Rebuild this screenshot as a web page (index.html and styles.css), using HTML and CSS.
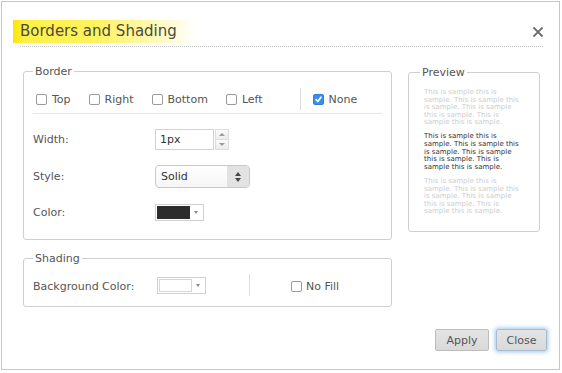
FILE: index.html
```html
<!DOCTYPE html>
<html lang="en">
<head>
<meta charset="utf-8">
<title>Borders and Shading</title>
<link rel="stylesheet" href="styles.css">
</head>
<body>
<div class="dialog">
  <div class="header">
    <h1 class="title">Borders and Shading</h1>
    <span class="close" aria-label="Close"><svg width="10" height="10" viewBox="0 0 10 10"><path d="M1 1L9 9M9 1L1 9" stroke="#6a6a6a" stroke-width="1.8" stroke-linecap="square"/></svg></span>
  </div>
  <div class="rule"></div>
  <div class="body">
    <div class="left">
      <fieldset class="group border-group">
        <legend>Border</legend>
        <div class="sides">
          <label class="check"><span class="cb"></span>Top</label>
          <label class="check"><span class="cb"></span>Right</label>
          <label class="check"><span class="cb"></span>Bottom</label>
          <label class="check last"><span class="cb"></span>Left</label>
          <span class="vsep"></span>
          <label class="check"><span class="cb checked"><svg width="9" height="9" viewBox="0 0 9 9"><path d="M2 4.6L3.8 6.5L7 2.2" fill="none" stroke="#fff" stroke-width="1.6" stroke-linecap="round" stroke-linejoin="round"/></svg></span>None</label>
        </div>
        <div class="hr"></div>
        <div class="form">
          <span class="lbl">Width:</span>
          <div class="spin">
            <span class="input">1px</span>
            <span class="spinbtns"><span class="sbtn"><i class="tri-up"></i></span><span class="sbtn"><i class="tri-down"></i></span></span>
          </div>
          <span class="lbl">Style:</span>
          <div class="select">
            <span class="sel-text">Solid</span>
            <span class="sel-arrows"><i class="tri-up dark"></i><i class="tri-down dark"></i></span>
          </div>
          <span class="lbl">Color:</span>
          <div class="picker"><span class="swatch dark-swatch"></span><i class="tri-down grey"></i></div>
        </div>
      </fieldset>
      <fieldset class="group shading">
        <legend>Shading</legend>
        <div class="shade-row">
          <span class="lbl bg-lbl">Background Color:</span>
          <div class="picker"><span class="swatch white-swatch"></span><i class="tri-down grey"></i></div>
          <span class="vsep shade-sep"></span>
          <label class="check"><span class="cb"></span>No Fill</label>
        </div>
      </fieldset>
    </div>
    <fieldset class="group preview">
      <legend>Preview</legend>
      <div class="preview-clip">
        <p class="ptext light">This is sample this is sample. This is sample this is sample. This is sample this is sample. This is sample this is sample.</p>
        <p class="ptext darktext">This is sample this is sample. This is sample this is sample. This is sample this is sample. This is sample this is sample.</p>
        <p class="ptext light">This is sample this is sample. This is sample this is sample. This is sample this is sample. This is sample this is sample.</p>
      </div>
    </fieldset>
  </div>
  <div class="footer">
    <button class="btn apply">Apply</button>
    <button class="btn primary">Close</button>
  </div>
</div>
</body>
</html>
```
FILE: styles.css
```css
html, body {
  margin: 0;
  padding: 0;
  background: #fff;
  font-family: "DejaVu Sans", "Liberation Sans", sans-serif;
}

.dialog {
  margin: 1px;
  width: 559px;
  height: 369px;
  box-sizing: border-box;
  border: 1px solid #c6c6c6;
  background: #fff;
}

.header {
  display: flex;
  align-items: center;
  justify-content: space-between;
  padding: 18px 16px 0 11px;
}

.title {
  margin: 0;
  font-size: 15px;
  font-weight: normal;
  color: #4a4a40;
  height: 23px;
  line-height: 23px;
  width: 176px;
  padding-left: 7px;
  background: linear-gradient(to right, #ffe400 0%, #fff048 6%, #fff35e 45%, #fff9b0 75%, rgba(255,255,255,0) 100%);
}

.close {
  display: flex;
  width: 10px;
  height: 10px;
}

.rule {
  margin: 3px 16px 0 18px;
  border-top: 1px dotted #c4c4c4;
}

.body {
  display: flex;
  align-items: flex-start;
  gap: 16px;
  padding: 18px 19px 0 21px;
}

.left {
  width: 369px;
  display: flex;
  flex-direction: column;
  gap: 12px;
}

.group {
  margin: 0;
  padding: 0 9px;
  border: 1px solid #cfcfcf;
  border-radius: 3px;
  min-width: 0;
}

legend {
  padding: 0 2px;
  font-size: 11px;
  line-height: 13px;
  color: #555;
}

.border-group {
  padding-bottom: 16px;
}

.sides {
  display: flex;
  align-items: center;
  height: 22px;
  margin-top: 10px;
  padding-left: 3px;
}

.check {
  display: flex;
  align-items: center;
  gap: 5px;
  font-size: 11px;
  color: #555;
  margin-right: 18px;
}

.check.last {
  margin-right: 37px;
}

.cb {
  width: 11px;
  height: 11px;
  box-sizing: border-box;
  border: 1px solid #9a9a9a;
  border-radius: 2px;
  background: #fff;
  display: flex;
  align-items: center;
  justify-content: center;
}

.cb.checked {
  background: #3b8fe9;
  border-color: #2f7fd6;
}

.vsep {
  width: 1px;
  height: 22px;
  background: #dcdcdc;
  margin-right: 12px;
}

.hr {
  height: 1px;
  background: #e6e6e6;
  margin-top: 3px;
}

.form {
  display: grid;
  grid-template-columns: 122px auto;
  grid-template-rows: 23px 23px 21px;
  row-gap: 14px;
  margin-top: 14px;
  align-items: center;
  justify-items: start;
}

.lbl {
  font-size: 11px;
  color: #555;
}

.spin {
  display: flex;
  gap: 1px;
}

.input {
  width: 59px;
  height: 21px;
  box-sizing: border-box;
  border: 1px solid #d2d2d2;
  font-size: 11px;
  line-height: 19px;
  padding-left: 4px;
  color: #333;
}

.spinbtns {
  display: flex;
  flex-direction: column;
  width: 14px;
  height: 21px;
}

.sbtn {
  flex: 1;
  box-sizing: border-box;
  border: 1px solid #dedede;
  background: linear-gradient(#fafafa, #ececec);
  display: flex;
  align-items: center;
  justify-content: center;
}

.sbtn + .sbtn {
  border-top: none;
}

.tri-up, .tri-down {
  display: block;
  width: 0;
  height: 0;
  border-left: 3px solid transparent;
  border-right: 3px solid transparent;
}

.tri-up {
  border-bottom: 3px solid #9a9a9a;
}

.tri-down {
  border-top: 3px solid #9a9a9a;
}

.tri-up.dark {
  border-bottom-color: #444;
  border-left-width: 3.5px;
  border-right-width: 3.5px;
  border-bottom-width: 4px;
}

.tri-down.dark {
  border-top-color: #444;
  border-left-width: 3.5px;
  border-right-width: 3.5px;
  border-top-width: 4px;
}

.select {
  display: flex;
  width: 95px;
  height: 23px;
  box-sizing: border-box;
  border: 1px solid #c9c9c9;
  border-radius: 4px;
  overflow: hidden;
  background: linear-gradient(#ffffff, #f6f6f6);
}

.sel-text {
  flex: 1;
  font-size: 11px;
  line-height: 21px;
  padding-left: 5px;
  color: #333;
}

.sel-arrows {
  width: 22px;
  background: #e2e2e2;
  display: flex;
  flex-direction: column;
  align-items: center;
  justify-content: center;
  gap: 2px;
}

.picker {
  display: flex;
  align-items: center;
  width: 49px;
  height: 17px;
  box-sizing: border-box;
  border: 1px solid #d0d0d0;
  padding: 1px;
  background: #fff;
}

.swatch {
  width: 33px;
  height: 13px;
  box-sizing: border-box;
}

.dark-swatch {
  background: #2c2c2c;
}

.white-swatch {
  background: #fff;
  border: 1px solid #d6d6d6;
}

.tri-down.grey {
  margin-left: 4px;
  border-left-width: 2.5px;
  border-right-width: 2.5px;
  border-top: 3px solid #8a8a8a;
}

.shading {
  padding-bottom: 10px;
}

.shade-row {
  display: flex;
  align-items: center;
  height: 22px;
  margin-top: 9px;
}

.bg-lbl {
  width: 124px;
  padding-top: 3px;
}

.shade-sep {
  margin-left: 43px;
  margin-right: 41px;
}

.shade-row .check {
  padding-top: 3px;
  gap: 4px;
}

.preview {
  width: 132px;
  box-sizing: border-box;
  padding: 0 15px 16px;
  margin-top: 1px;
}

.preview legend {
  margin-left: -4px;
}

.preview-clip {
  height: 126px;
  overflow: hidden;
  margin-top: 10px;
  width: 100px;
}

.ptext {
  margin: 0 0 6.5px;
  width: 98px;
  font-size: 7px;
  line-height: 7.6px;
}

.light {
  color: #cdcdcd;
}

.darktext {
  color: #333;
}

.footer {
  display: flex;
  justify-content: flex-end;
  gap: 7px;
  padding-right: 12px;
  margin-top: 22px;
}

.btn {
  height: 22px;
  box-sizing: border-box;
  border: 1px solid #bcbcbc;
  border-radius: 2px;
  background: linear-gradient(#e4e4e4, #d9d9d9);
  font-family: "DejaVu Sans", "Liberation Sans", sans-serif;
  font-size: 11px;
  color: #555;
  padding: 0;
}

.apply {
  width: 54px;
}

.primary {
  width: 51px;
  border-color: #a9bccf;
  box-shadow: 0 0 4px 1px rgba(120, 180, 235, 0.75);
}
```
